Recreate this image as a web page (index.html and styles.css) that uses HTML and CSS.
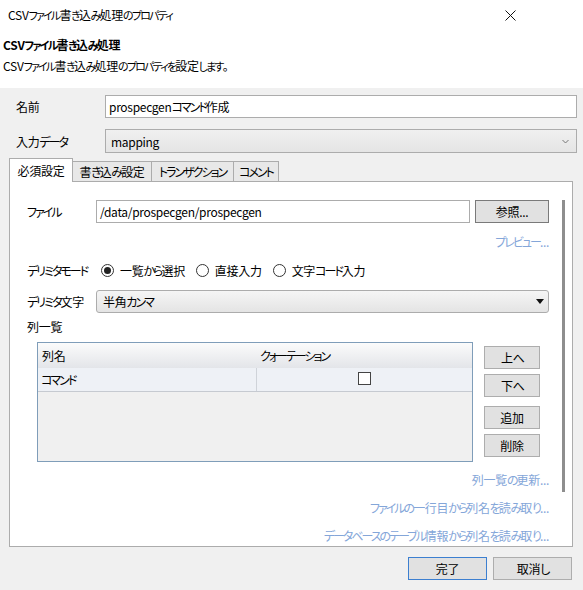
FILE: index.html
```html
<!DOCTYPE html>
<html lang="ja">
<head>
<meta charset="utf-8">
<title>CSVファイル書き込み処理のプロパティ</title>
<link rel="stylesheet" href="styles.css">
</head>
<body>
<div class="dialog">
  <div class="titlebar">
    <span class="title">CSV<span class="k">ファイル</span>書<span class="k">き</span>込<span class="k">み</span>処理<span class="k">のプロパティ</span></span>
    <span class="close">
      <svg width="11" height="11" viewBox="0 0 11 11"><path d="M0.5 0.5 L10.5 10.5 M10.5 0.5 L0.5 10.5" stroke="#111" stroke-width="1" fill="none"/></svg>
    </span>
  </div>

  <div class="banner">
    <div class="banner-title">CSV<span class="k">ファイル</span>書<span class="k">き</span>込<span class="k">み</span>処理</div>
    <div class="banner-desc">CSV<span class="k">ファイル</span>書<span class="k">き</span>込<span class="k">み</span>処理<span class="k">のプロパティを</span>設定<span class="k">します</span>。</div>
  </div>

  <div class="content">
    <div class="field-row">
      <span class="field-label">名前</span>
      <div class="textbox">prospecgen<span class="k">コマンド</span>作成</div>
    </div>
    <div class="field-row field-row-gap">
      <span class="field-label">入力<span class="k">データ</span></span>
      <div class="combo combo-flat">
        <span>mapping</span>
        <svg class="chevron" width="7" height="5" viewBox="0 0 7 5"><path d="M0.5 1 L3.5 4 L6.5 1" stroke="#777" stroke-width="1" fill="none"/></svg>
      </div>
    </div>

    <div class="tabs">
      <div class="tab tab-active">必須設定</div>
      <div class="tab tab-w2">書<span class="k">き</span>込<span class="k">み</span>設定</div>
      <div class="tab tab-w3"><span class="k">トランザクション</span></div>
      <div class="tab tab-w4"><span class="k">コメント</span></div>
    </div>

    <div class="panel">
      <div class="panel-body">
        <div class="prop-row">
          <span class="prop-label"><span class="k">ファイル</span></span>
          <div class="textbox textbox-file">/data/prospecgen/prospecgen</div>
          <div class="btn btn-browse">参照...</div>
        </div>
        <div class="link-row link-preview"><span class="link"><span class="k">プレビュー</span>...</span></div>

        <div class="prop-row radio-row">
          <span class="prop-label"><span class="k">デリミタモード</span></span>
          <span class="radio radio-on"></span><span class="radio-text">一覧<span class="k">から</span>選択</span>
          <span class="radio"></span><span class="radio-text">直接入力</span>
          <span class="radio"></span><span class="radio-text">文字<span class="k">コード</span>入力</span>
        </div>

        <div class="prop-row delim-row">
          <span class="prop-label"><span class="k">デリミタ</span>文字</span>
          <div class="combo combo-round">
            <span>半角<span class="k">カンマ</span></span>
            <svg class="arrow" width="8" height="5" viewBox="0 0 8 5"><path d="M0 0 H8 L4 5 Z" fill="#111"/></svg>
          </div>
        </div>

        <div class="section-label">列一覧</div>

        <div class="columns">
          <div class="grid">
            <div class="grid-head">
              <div class="cell cell-name">列名</div>
              <div class="cell cell-quote"><span class="k">クォーテーション</span></div>
            </div>
            <div class="grid-row">
              <div class="cell cell-name"><span class="k">コマンド</span></div>
              <div class="cell cell-quote cell-check"><span class="checkbox"></span></div>
            </div>
          </div>
          <div class="side-buttons">
            <div class="btn btn-side">上<span class="k">へ</span></div>
            <div class="btn btn-side">下<span class="k">へ</span></div>
            <div class="btn btn-side btn-sep">追加</div>
            <div class="btn btn-side">削除</div>
          </div>
        </div>

        <div class="link-row link-first"><span class="link">列一覧<span class="k">の</span>更新...</span></div>
        <div class="link-row"><span class="link"><span class="k">ファイルの</span>一行目<span class="k">から</span>列名<span class="k">を</span>読<span class="k">み</span>取<span class="k">り</span>...</span></div>
        <div class="link-row"><span class="link"><span class="k">データベースのテーブル</span>情報<span class="k">から</span>列名<span class="k">を</span>読<span class="k">み</span>取<span class="k">り</span>...</span></div>
      </div>
      <div class="vscroll"></div>
    </div>

    <div class="footer">
      <div class="btn btn-footer btn-default">完了</div>
      <div class="btn btn-footer">取消<span class="k">し</span></div>
    </div>
  </div>
</div>
</body>
</html>
```

FILE: styles.css
```css
* {
  box-sizing: border-box;
}

html, body {
  margin: 0;
  padding: 0;
}

body {
  width: 583px;
  height: 590px;
  background: #f0f0f0;
  font-family: "Noto Sans CJK JP", "Noto Sans", sans-serif;
  font-size: 12px;
  font-feature-settings: "palt";
  letter-spacing: -0.3px;
  color: #000;
  overflow: hidden;
}

/* kana runs are set tighter than kanji and latin text */
.k {
  letter-spacing: -2px;
}

.titlebar .k,
.banner .k {
  font-size: 11px;
  letter-spacing: -1.8px;
}

.dialog {
  width: 583px;
  height: 590px;
  display: flex;
  flex-direction: column;
}

/* window caption */
.titlebar {
  height: 30px;
  background: #fff;
  display: flex;
  align-items: center;
  justify-content: space-between;
  padding: 0 67px 0 8px;
}

.title {
  line-height: 30px;
  white-space: nowrap;
}

.close {
  display: flex;
}

/* white description banner */
.banner {
  height: 58px;
  background: #fff;
  padding: 5px 0 0 3px;
  white-space: nowrap;
}

.banner-title {
  font-weight: bold;
  line-height: 20px;
}

.banner-desc {
  line-height: 20px;
  margin-top: 1px;
}

/* grey dialog content */
.content {
  padding: 7px 10px 0 9px;
  display: flex;
  flex-direction: column;
}

.field-row {
  display: flex;
  align-items: center;
  margin: 0 -4px 0 7px;
}

.field-row-gap {
  margin-top: 11px;
}

.field-label {
  width: 89px;
  flex: none;
  white-space: nowrap;
}

.textbox {
  flex: 1;
  height: 23px;
  background: #fff;
  border: 1px solid #acacac;
  padding: 0 3px;
  line-height: 21px;
  white-space: nowrap;
}

.combo {
  flex: 1;
  display: flex;
  align-items: center;
  justify-content: space-between;
  border: 1px solid #acacac;
  background: linear-gradient(#f0f0f0, #e5e5e5);
  white-space: nowrap;
}

.combo-flat {
  height: 24px;
  padding: 0 7px 0 5px;
}

.chevron {
  display: block;
}

.combo-round {
  height: 23px;
  border-radius: 3px;
  padding: 0 4px 0 6px;
  background: linear-gradient(#f5f5f5, #e4e4e4);
}

.arrow {
  display: block;
}

/* tab strip */
.tabs {
  margin-top: 5px;
  height: 23px;
  display: flex;
  align-items: flex-end;
}

.tab {
  height: 20px;
  border: 1px solid #acacac;
  border-bottom: none;
  background: #e8e8e8;
  margin-left: -1px;
  display: flex;
  align-items: center;
  justify-content: center;
  white-space: nowrap;
}

.tab-active {
  height: 24px;
  width: 64px;
  margin-left: 0;
  margin-bottom: -1px;
  background: #fff;
  position: relative;
  z-index: 1;
}

.tab-w2 {
  width: 80px;
}

.tab-w3 {
  width: 83px;
}

.tab-w4 {
  width: 46px;
}

/* tab page */
.panel {
  height: 366px;
  background: #fff;
  border: 1px solid #acacac;
  display: flex;
}

.panel-body {
  width: 539px;
  flex: none;
  padding: 18px 0 0 17px;
  display: flex;
  flex-direction: column;
}

.vscroll {
  width: 3px;
  height: 292px;
  margin: 18px 0 0 13px;
  background: #8e8e8e;
}

.prop-row {
  display: flex;
  align-items: center;
}

.prop-label {
  width: 69px;
  flex: none;
  white-space: nowrap;
}

.textbox-file {
  flex: none;
  width: 374px;
}

.btn {
  display: flex;
  align-items: center;
  justify-content: center;
  height: 23px;
  background: #e1e1e1;
  border: 1px solid #adadad;
  white-space: nowrap;
}

.btn-browse {
  width: 74px;
  margin-left: 5px;
  border-color: #7a7a7a;
}

.link-row {
  text-align: right;
  line-height: 20px;
  margin-top: 8px;
  white-space: nowrap;
}

.link-preview {
  margin-top: 9px;
}

.link {
  color: #84a6d9;
}

.radio-row {
  height: 20px;
  margin-top: 8px;
  white-space: nowrap;
}

.radio {
  width: 13px;
  height: 13px;
  border: 1px solid #333;
  border-radius: 50%;
  background: #fff;
  flex: none;
  margin-left: 5px;
  display: flex;
  align-items: center;
  justify-content: center;
}

.radio-text + .radio {
  margin-left: 11px;
}

.radio-on::after {
  content: "";
  width: 7px;
  height: 7px;
  border-radius: 50%;
  background: #222;
}

.radio-text {
  margin-left: 6px;
}

.delim-row {
  margin-top: 10px;
}

.delim-row .combo {
  flex: none;
  width: 453px;
}

.section-label {
  line-height: 20px;
  margin-top: 4px;
}

/* column list */
.columns {
  display: flex;
  margin: 5px 0 0 10px;
}

.grid {
  width: 436px;
  height: 120px;
  border: 1px solid #7f9db9;
  background: #f0f0f0;
}

.grid-head {
  height: 25px;
  display: flex;
  background: linear-gradient(#fbfbfb, #e3e5e9);
}

.grid-row {
  height: 24px;
  display: flex;
  background: #eef1f6;
  border-bottom: 1px solid #c6cad1;
}

.cell {
  display: flex;
  align-items: center;
  padding-left: 4px;
  white-space: nowrap;
}

.cell-name {
  width: 219px;
}

.grid-row .cell-name {
  padding-left: 3px;
  border-right: 1px solid #cfd3d9;
}

.cell-quote {
  flex: 1;
}

.grid-head .cell-quote {
  padding-left: 3px;
}

.cell-check {
  justify-content: center;
  padding-left: 0;
}

.checkbox {
  width: 13px;
  height: 13px;
  border: 1px solid #444;
  background: #fff;
  margin-bottom: 2px;
}

.side-buttons {
  margin-left: 11px;
  padding-top: 4px;
  display: flex;
  flex-direction: column;
  gap: 5px;
}

.btn-side {
  width: 56px;
}

.btn-sep {
  margin-top: 4px;
}

.link-first {
  margin-top: 8px;
}

/* dialog buttons */
.footer {
  margin-top: 10px;
  display: flex;
  justify-content: flex-end;
  gap: 6px;
  padding-right: 1px;
}

.btn-footer {
  width: 79px;
}

.btn-default {
  border-color: #3c7fd0;
}
```
